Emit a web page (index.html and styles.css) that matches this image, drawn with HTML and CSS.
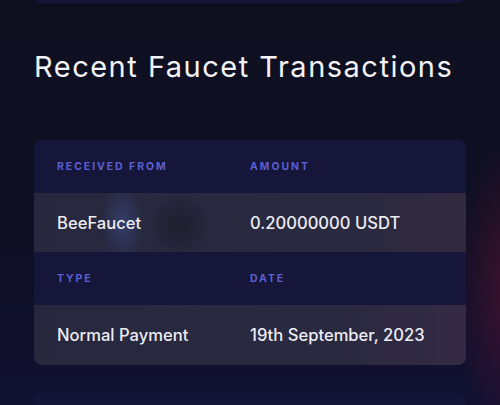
FILE: index.html
```html
<!DOCTYPE html>
<html lang="en">
<head>
  <meta charset="UTF-8" />
  <meta name="viewport" content="width=device-width, initial-scale=1.0" />
  <title>Recent Faucet Transactions</title>
  <link rel="stylesheet" href="styles.css">
</head>
<body>

<div class="card card-top"></div>

<h2 class="title">Recent Faucet Transactions</h2>

<section class="card tx">
  <div class="row head">
    <span>Received From</span>
    <span>Amount</span>
  </div>
  <div class="row data first">
    <span>BeeFaucet</span>
    <span>0.20000000 USDT</span>
  </div>
  <div class="row head">
    <span>Type</span>
    <span>Date</span>
  </div>
  <div class="row data">
    <span>Normal Payment</span>
    <span>19th September, 2023</span>
  </div>
</section>

<div class="card card-next"></div>

</body>
</html>
```

FILE: styles.css
```css
html, body {
  height: 100%;
}
body {
  margin: 0;
  padding: 0 34px;
  overflow: hidden;
  font-family: 'Inter', 'Noto Sans', sans-serif;
  color: #eeeef4;
  background:
    radial-gradient(ellipse 50px 150px at 505px 290px, rgba(100, 18, 50, .5), rgba(100, 18, 50, 0)),
    linear-gradient(180deg, #0e0f1f 0%, #0f1024 60%, #111132 100%);
}
.card {
  background: #141539;
  border-radius: 8px;
}
.card-top {
  height: 23px;
  margin-top: -20px;
}
.title {
  margin: 0;
  padding: 45px 0 54px;
  font-size: 29px;
  line-height: 38px;
  font-weight: 400;
  letter-spacing: 1.5px;
  color: #f2f2f7;
}
.tx {
  overflow: hidden;
  background: #151639;
}
.row {
  display: grid;
  grid-template-columns: 193px 1fr;
  padding: 0 23px;
  align-items: center;
}
.head {
  height: 53px;
  font-size: 10.4px;
  font-weight: 700;
  letter-spacing: 2px;
  text-transform: uppercase;
  color: #5b5fd3;
}
.data {
  height: 60px;
  font-size: 16.6px;
  font-weight: 500;
  color: #ececf3;
  background: linear-gradient(90deg, #27273d 0%, #29293f 70%, #352a45 100%);
}
.data.first {
  height: 59px;
  background:
    radial-gradient(ellipse 22px 40px at 88px 30px, rgba(70, 90, 170, .4), rgba(70, 90, 170, 0)),
    radial-gradient(ellipse 30px 30px at 146px 32px, rgba(18, 18, 28, .45), rgba(18, 18, 28, 0)),
    linear-gradient(90deg, #27273d 0%, #29293f 70%, #32293f 100%);
}
.card-next {
  height: 40px;
  margin-top: 28px;
  background: #131436;
}
```
